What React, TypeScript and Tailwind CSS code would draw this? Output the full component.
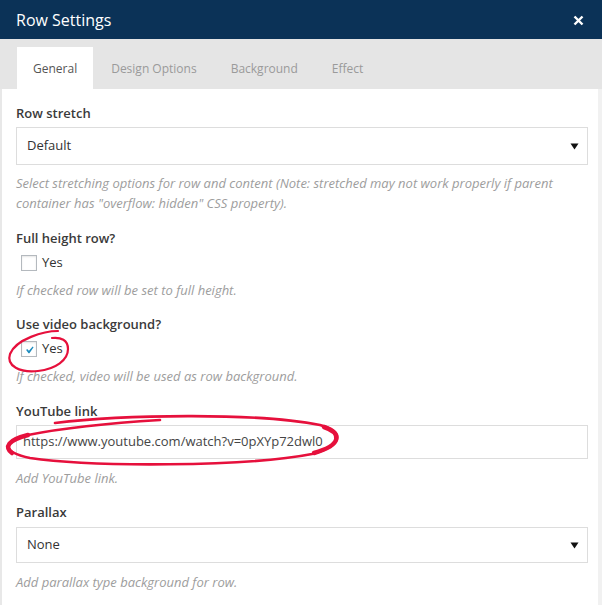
import React from 'react';

const Arrow = () => (
  <svg width="9" height="7" viewBox="0 0 9 7" className="shrink-0">
    <path d="M0.5 0.5 L8.5 0.5 L4.5 6.5 Z" fill="#111" />
  </svg>
);

const Select = ({ value, tall }: { value: string; tall?: boolean }) => (
  <div
    className={
      'flex items-center justify-between border border-[#dddddd] bg-white pl-[10px] pr-[8px] text-[13px] text-[#333] ' +
      (tall ? 'h-[38px]' : 'h-[36px]')
    }
  >
    <span>{value}</span>
    <Arrow />
  </div>
);

const Help = ({ children, mt }: { children: React.ReactNode; mt: string }) => (
  <p className={'text-[13px] italic leading-5 text-[#9d9d9d] ' + mt}>{children}</p>
);

const Label = ({ children }: { children: React.ReactNode }) => (
  <div className="text-[13px] font-semibold leading-5 text-[#3a3a3a]">{children}</div>
);

const Checkbox = ({ checked }: { checked?: boolean }) => (
  <div className="mt-[5px] flex h-5 items-center pl-[5px] text-[13px] text-[#333]">
    <span className="flex h-4 w-4 items-center justify-center border border-[#b4b9be] bg-white shadow-[inset_0_1px_2px_rgba(0,0,0,0.1)]">
      {checked && (
        <svg width="13" height="13" viewBox="0 0 20 20">
          <path d="M14.83 4.89l1.34.94-5.81 8.38H9.02L5.78 9.67l1.34-1.25 2.57 2.4z" fill="#1e8cbe" transform="translate(-1.5 0) scale(1.1)" />
        </svg>
      )}
    </span>
    <span className="ml-[5px]">Yes</span>
  </div>
);

export default function App() {
  return (
    <div className="relative h-[605px] w-[602px] overflow-hidden bg-white font-['Open_Sans',sans-serif]">
      {/* header */}
      <div className="flex h-[39px] items-center justify-between bg-[#0b3257] pl-4 pr-[18px] pt-[1px] text-white">
        <span className="text-[16px]">Row Settings</span>
        <svg width="11" height="11" viewBox="0 0 11 11">
          <path d="M1.5 1.5 L9.5 9.5 M9.5 1.5 L1.5 9.5" stroke="#fff" strokeWidth="2.4" />
        </svg>
      </div>

      {/* tabs */}
      <div className="flex h-[50px] items-end gap-[2px] bg-[#e5e5e5] pl-[17px] text-[12px]">
        <div className="flex h-[42px] items-center bg-white px-4 pt-[2px] text-[#555]">General</div>
        <div className="flex h-[42px] items-center px-4 pt-[2px] text-[#9a9a9a]">Design Options</div>
        <div className="flex h-[42px] items-center px-4 pt-[2px] text-[#9a9a9a]">Background</div>
        <div className="flex h-[42px] items-center px-4 pt-[2px] text-[#9a9a9a]">Effect</div>
      </div>

      {/* body */}
      <div className="h-[516px] border-l-2 border-r-4 border-l-[#e8e8e8] border-r-[#f1f1f1] pl-[14px] pr-[10px] pt-[14px]">
        <Label>Row stretch</Label>
        <div className="mt-1">
          <Select value="Default" tall />
        </div>
        <Help mt="mt-2">
          Select stretching options for row and content (Note: stretched may not work properly if parent container has
          "overflow: hidden" CSS property).
        </Help>

        <div className="mt-[15px]">
          <Label>Full height row?</Label>
          <Checkbox />
          <Help mt="mt-[7px]">If checked row will be set to full height.</Help>
        </div>

        <div className="mt-[14px]">
          <Label>Use video background?</Label>
          <Checkbox checked />
          <Help mt="mt-[7px]">If checked, video will be used as row background.</Help>
        </div>

        <div className="mt-[15px]">
          <Label>YouTube link</Label>
          <div className="mt-1 flex h-[34px] items-center border border-[#dddddd] bg-white pl-[6px] text-[13px] text-[#454545]">
            https://www.youtube.com/watch?v=0pXYp72dwl0
          </div>
          <Help mt="mt-[9px]">Add YouTube link.</Help>
        </div>

        <div className="mt-[14px]">
          <Label>Parallax</Label>
          <div className="mt-[5px]">
            <Select value="None" />
          </div>
          <Help mt="mt-[9px]">Add parallax type background for row.</Help>
        </div>
      </div>

      {/* hand-drawn annotations */}
      <svg className="pointer-events-none absolute left-0 top-0" width="602" height="605" viewBox="0 0 602 605">
        <g fill="none" stroke="#e6103c" strokeLinecap="round">
          <path
            d="M58 331 C44 331 16 339 10 354 C6 366 20 373 38 371 C56 369 68 360 68 349 C68 340 61 337 52 338"
            strokeWidth="2.2"
          />
          <path
            d="M55 423 C120 415 256 412 320 425 C344 432 344 445 312 454 C246 467 90 467 30 458 C2 452 1 442 28 435 C58 429 110 423 160 420"
            strokeWidth="2.6"
          />
          <path d="M12 453 C4 447 8 440 28 435" strokeWidth="4.5" />
          <path d="M324 427 C342 433 342 445 314 453" strokeWidth="4.5" />
        </g>
      </svg>
    </div>
  );
}
